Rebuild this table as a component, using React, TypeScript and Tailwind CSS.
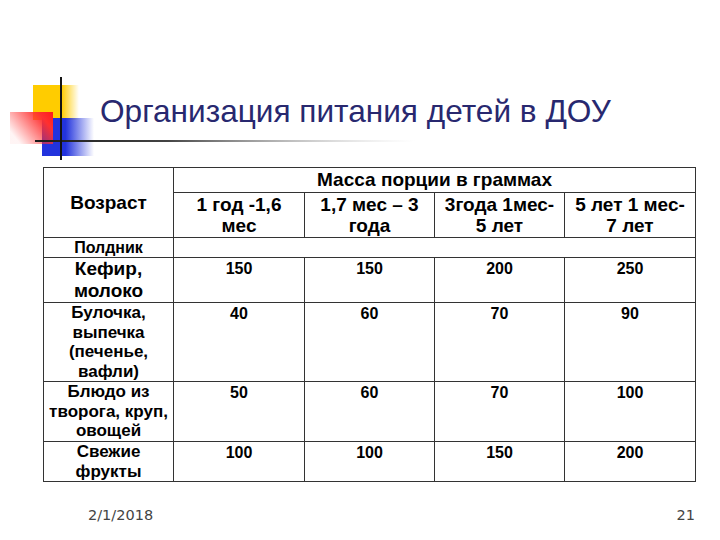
import React from 'react'

const ages = [
  ['1 год -1,6', 'мес'],
  ['1,7 мес – 3', 'года'],
  ['3года 1мес-', '5 лет'],
  ['5 лет 1 мес-', '7 лет'],
]

const rows = [
  { name: ['Кефир,', 'молоко'], values: ['150', '150', '200', '250'], h: 'h-[45px]', big: true },
  { name: ['Булочка,', 'выпечка', '(печенье,', 'вафли)'], values: ['40', '60', '70', '90'], h: 'h-[79px]' },
  { name: ['Блюдо из', 'творога, круп,', 'овощей'], values: ['50', '60', '70', '100'], h: 'h-[60px]' },
  { name: ['Свежие', 'фрукты'], values: ['100', '100', '150', '200'], h: 'h-[39px]' },
]

const Logo = () => (
  <svg className="absolute left-0 top-[70px]" width="420" height="100" viewBox="0 70 420 100">
    <defs>
      <linearGradient id="yel" x1="0" y1="0" x2="1" y2="0">
        <stop offset="0" stopColor="#ffcc00" />
        <stop offset="0.62" stopColor="#ffcc00" />
        <stop offset="1" stopColor="#ffcc00" stopOpacity="0" />
      </linearGradient>
      <linearGradient id="blu" x1="0" y1="0" x2="1" y2="0">
        <stop offset="0" stopColor="#2233dd" />
        <stop offset="0.45" stopColor="#2233dd" />
        <stop offset="1" stopColor="#2233dd" stopOpacity="0" />
      </linearGradient>
      <linearGradient id="red" x1="1" y1="0" x2="0" y2="0.6">
        <stop offset="0" stopColor="#ff1a1a" />
        <stop offset="0.25" stopColor="#ff3030" />
        <stop offset="1" stopColor="#ff3030" stopOpacity="0.05" />
      </linearGradient>
      <linearGradient id="line" x1="0" y1="0" x2="1" y2="0">
        <stop offset="0" stopColor="#1a1a1a" />
        <stop offset="0.35" stopColor="#444" />
        <stop offset="1" stopColor="#bbb" stopOpacity="0" />
      </linearGradient>
    </defs>
    <rect x="33" y="85" width="46" height="35" fill="url(#yel)" />
    <rect x="42" y="118" width="52" height="38" fill="url(#blu)" />
    <rect x="10" y="112" width="43" height="32" fill="url(#red)" />
    <rect x="35" y="140" width="380" height="2" fill="url(#line)" />
    <rect x="60" y="77" width="2" height="83" fill="#141414" />
  </svg>
)

const App = () => {
  return (
    <div className="w-[720px] h-[540px] bg-white overflow-hidden flex flex-col">
      {/* Title */}
      <div className="relative h-[167px] shrink-0">
        <Logo />
        <h1
          className="relative pt-[95px] pl-[100px] text-[31.6px] leading-[32px] text-[#28286f] whitespace-nowrap"
          style={{ fontFamily: '"Liberation Sans", Arial, sans-serif' }}
        >
          Организация питания детей в ДОУ
        </h1>
      </div>

      {/* Table */}
      <div className="pl-[43px]" style={{ fontFamily: '"Liberation Sans", Arial, sans-serif' }}>
        <table className="w-[652px] border-collapse table-fixed font-bold text-black">
          <colgroup>
            <col className="w-[130px]" />
            <col className="w-[131px]" />
            <col className="w-[130px]" />
            <col className="w-[130px]" />
            <col className="w-[131px]" />
          </colgroup>
          <tbody>
            <tr className="h-[25px]">
              <td rowSpan={2} className="border border-[#333] text-center align-middle text-[19px] leading-[21px]">
                Возраст
              </td>
              <td colSpan={4} className="border border-[#333] text-center align-middle text-[19px] leading-[20px]">
                Масса порции в граммах
              </td>
            </tr>
            <tr className="h-[45px]">
              {ages.map((a) => (
                <td key={a[0]} className="border border-[#333] text-center align-middle text-[19px] leading-[21px] whitespace-nowrap">
                  <div>{a[0]}</div>
                  <div>{a[1]}</div>
                </td>
              ))}
            </tr>
            <tr className="h-[20px]">
              <td className="border border-[#333] text-center align-middle text-[16px] leading-[17px]">Полдник</td>
              <td colSpan={4} className="border border-[#333]"></td>
            </tr>
            {rows.map((r) => (
              <tr key={r.name[0]} className={r.h}>
                <td
                  className={`border border-[#333] text-center align-middle whitespace-nowrap ${
                    r.big ? 'text-[19px] leading-[22px]' : 'text-[17px] leading-[19.5px]'
                  }`}
                >
                  {r.name.map((n) => (
                    <div key={n}>{n}</div>
                  ))}
                </td>
                {r.values.map((v, i) => (
                  <td key={i} className="border border-[#333] text-center align-top text-[16px] leading-[17px] pt-[2px]">
                    {v}
                  </td>
                ))}
              </tr>
            ))}
          </tbody>
        </table>
      </div>

      {/* Footer */}
      <div
        className="flex justify-between pl-[88px] pr-[25px] pt-[23px] text-[14.5px] text-[#444]"
        style={{ fontFamily: 'Tahoma, "DejaVu Sans", sans-serif' }}
      >
        <span>2/1/2018</span>
        <span>21</span>
      </div>
    </div>
  )
}

export default App
